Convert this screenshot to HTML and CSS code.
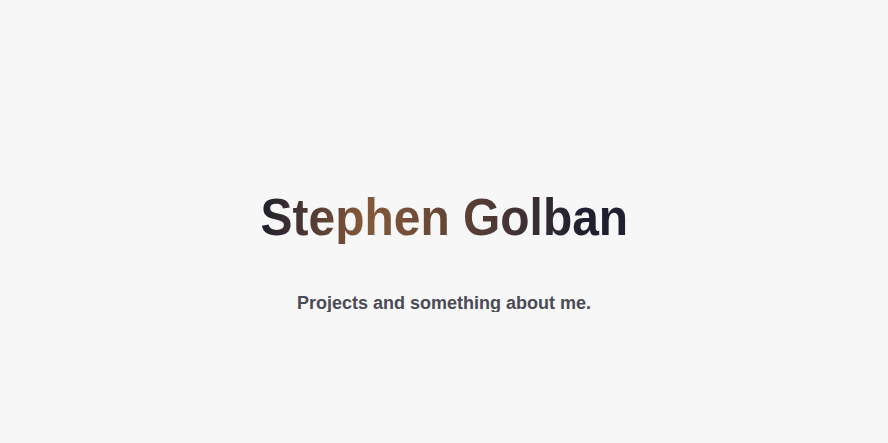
FILE: index.html
```html
<!DOCTYPE html>
<html lang="en">
<head>
<meta charset="utf-8">
<title>Stephen Golban</title>
<link rel="stylesheet" href="styles.css">
</head>
<body>
<main class="hero">
  <h1 class="hero-title">Stephen Golban</h1>
  <p class="hero-sub">Projects and something about me.</p>
</main>
</body>
</html>
```

FILE: styles.css
```css
html, body {
  margin: 0;
  padding: 0;
  background: #f7f7f7;
  font-family: "Liberation Sans", Arial, sans-serif;
}
.hero {
  display: flex;
  flex-direction: column;
  align-items: center;
  padding-top: 190px;
}
.hero-title {
  margin: 0;
  font-size: 52px;
  line-height: 54px;
  font-weight: 700;
  transform: scaleX(0.922);
  background: linear-gradient(90deg, #1e1e2e 0%, #86593a 28%, #5d4236 55%, #1e1f2f 88%, #1e1f2f 100%);
  -webkit-background-clip: text;
  background-clip: text;
  color: transparent;
}
.hero-sub {
  margin: 50px 0 0;
  font-size: 18px;
  line-height: 18px;
  font-weight: 700;
  color: #4b4b55;
}
```
